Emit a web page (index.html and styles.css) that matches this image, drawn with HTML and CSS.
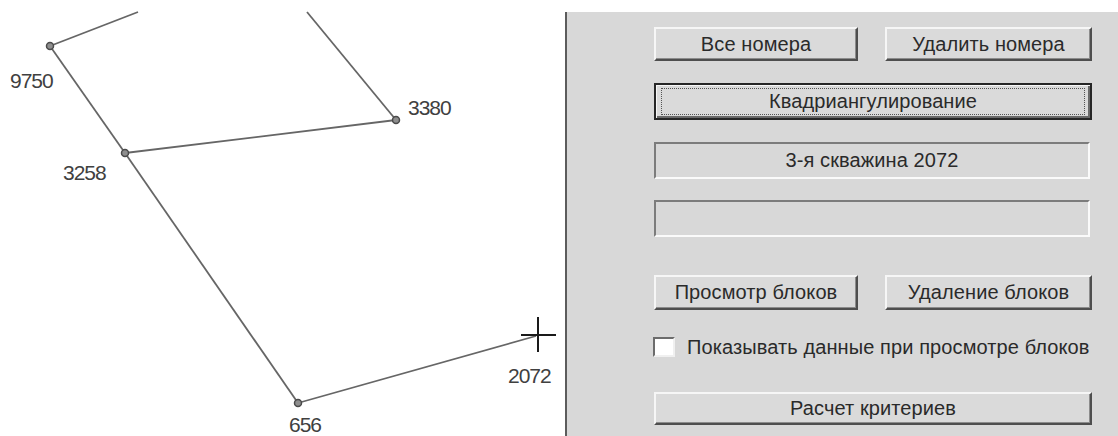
FILE: index.html
```html
<!DOCTYPE html>
<html lang="ru">
<head>
<meta charset="utf-8">
<title>Блоки скважин</title>
<link rel="stylesheet" href="styles.css">
</head>
<body>
<div class="app">
  <div class="canvas">
    <svg class="plot" width="565" height="436" viewBox="0 0 565 436">
      <g class="edges">
        <line x1="50" y1="46" x2="138" y2="12"/>
        <line x1="50" y1="46" x2="125" y2="153"/>
        <line x1="125" y1="153" x2="396" y2="120"/>
        <line x1="396" y1="120" x2="307" y2="12"/>
        <line x1="125" y1="153" x2="298" y2="403"/>
        <line x1="298" y1="403" x2="536" y2="336"/>
      </g>
      <g class="nodes">
        <circle cx="50" cy="46" r="3.5"/>
        <circle cx="125" cy="153" r="3.5"/>
        <circle cx="396" cy="120" r="3.5"/>
        <circle cx="298" cy="403" r="3.5"/>
      </g>
      <g class="cursor">
        <line x1="521" y1="335" x2="556" y2="335"/>
        <line x1="538" y1="317" x2="538" y2="352"/>
      </g>
      <g class="labels">
        <text x="10" y="88">9750</text>
        <text x="63" y="180">3258</text>
        <text x="408" y="115">3380</text>
        <text x="289" y="432">656</text>
        <text x="508" y="383">2072</text>
      </g>
    </svg>
  </div>
  <div class="panel">
    <div class="pair row-numbers">
      <button class="btn">Все номера</button>
      <button class="btn">Удалить номера</button>
    </div>
    <button class="btn btn-default row-quad"><span class="focus">Квадриангулирование</span></button>
    <div class="field row-well">3-я скважина 2072</div>
    <div class="field row-empty"></div>
    <div class="pair row-blocks">
      <button class="btn">Просмотр блоков</button>
      <button class="btn">Удаление блоков</button>
    </div>
    <label class="check row-check"><span class="box"></span><span>Показывать данные при просмотре блоков</span></label>
    <button class="btn row-criteria">Расчет критериев</button>
  </div>
</div>
</body>
</html>
```

FILE: styles.css
```css
html, body {
  margin: 0;
  padding: 0;
  background: #ffffff;
  overflow: hidden;
}

.app {
  display: flex;
  width: 1118px;
  height: 436px;
}

.canvas {
  width: 565px;
  flex: none;
  background: #ffffff;
}

.plot {
  display: block;
}

.edges line {
  stroke: #666666;
  stroke-width: 1.8;
}

.nodes circle {
  fill: #8e8e8e;
  stroke: #4a4a4a;
  stroke-width: 1.5;
}

.cursor line {
  stroke: #1a1a1a;
  stroke-width: 2;
}

.labels text {
  font-family: "Liberation Sans", Arial, sans-serif;
  font-size: 21px;
  letter-spacing: -1px;
  fill: #404040;
}

.panel {
  flex: 1;
  margin-top: 12px;
  background: #d8d8d8;
  border-left: 2px solid #5c5c5c;
  padding: 15px 26px 0 87px;
  display: flex;
  flex-direction: column;
  font-family: "Liberation Sans", Arial, sans-serif;
  font-size: 20px;
  letter-spacing: 0.1px;
  color: #2a2a2a;
}

.pair {
  display: grid;
  grid-template-columns: 204px 207px;
  column-gap: 27px;
}

.btn {
  box-sizing: border-box;
  font: inherit;
  letter-spacing: inherit;
  color: inherit;
  background: #dadada;
  border: 2px solid;
  border-color: #f6f6f6 #4e4e4e #4e4e4e #f6f6f6;
  box-shadow: inset -1px -1px 0 #8c8c8c;
  padding: 0;
  display: flex;
  align-items: center;
  justify-content: center;
}

.row-numbers .btn { height: 34px; }

.btn-default {
  border: 2px solid #262626;
  box-shadow: inset 1px 1px 0 #f6f6f6, inset -2px -2px 0 #6a6a6a;
  padding: 4px 6px;
}

.focus {
  flex: 1;
  align-self: stretch;
  display: flex;
  align-items: center;
  justify-content: center;
  outline: 1px dotted #555555;
}

.row-quad {
  height: 37px;
  margin-top: 22px;
}

.field {
  box-sizing: border-box;
  height: 37px;
  border: 2px solid;
  border-color: #7c7c7c #fafafa #fafafa #7c7c7c;
  background: #d8d8d8;
  display: flex;
  align-items: center;
  justify-content: center;
  width: 436px;
}

.row-well { margin-top: 22px; }
.row-empty { margin-top: 21px; }

.row-blocks {
  margin-top: 38px;
}

.row-blocks .btn { height: 35px; }

.check {
  margin-top: 27px;
  height: 20px;
  display: flex;
  align-items: center;
  gap: 12px;
  margin-left: -1px;
}

.box {
  box-sizing: border-box;
  width: 22px;
  height: 20px;
  flex: none;
  background: #ffffff;
  border: 2px solid;
  border-color: #6c6c6c #f0f0f0 #f0f0f0 #6c6c6c;
}

.row-criteria {
  height: 33px;
  margin-top: 35px;
}
```
